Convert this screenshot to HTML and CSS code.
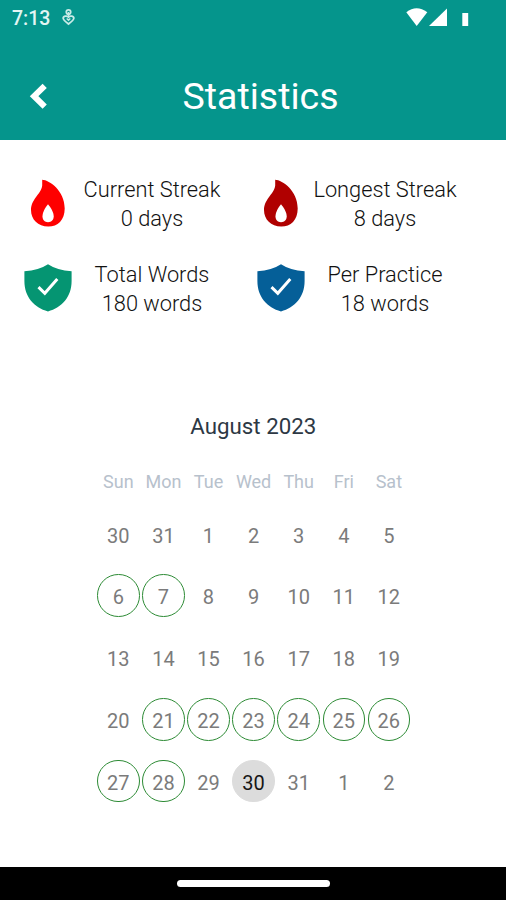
FILE: index.html
```html
<!DOCTYPE html>
<html lang="en">
<head>
<meta charset="utf-8">
<title>Statistics</title>
<link rel="stylesheet" href="styles.css">
</head>
<body>
<div class="screen">
  <header class="header">
    <div class="status">
      <span class="time">7:13</span>
      <svg class="notice" width="13" height="18" viewBox="0 0 13 18" fill="none" stroke="currentColor" stroke-width="1.8"><circle cx="6.5" cy="4" r="2.2"/><path d="M6.5 9.2C4.7 7.3 1 8.1 1.2 10.5C1.4 12.2 4 14.1 6.5 16C9 14.1 11.6 12.2 11.8 10.5C12 8.1 8.3 7.3 6.5 9.2Z"/><path d="M6.5 4v4M4.7 10.5l1.8 1.8 1.8-1.8" stroke-width="1.4"/></svg>
      <svg class="signals" width="66" height="20" viewBox="0 0 66 20" fill="currentColor"><path d="M0.3 4.3Q10.5-4 21.3 4.3L10.7 18Z"/><path d="M41 0.5V18H23Z"/><path d="M56.3 5h5.9v13h-5.9z"/></svg>
    </div>
    <div class="titlebar">
      <svg class="back" width="20" height="28" viewBox="0 0 20 28"><path d="M15.7 3.8 5.1 14.2 15.7 24.6" fill="none" stroke="currentColor" stroke-width="6"/></svg>
      <h1 class="title">Statistics</h1>
    </div>
  </header>
  <main class="content">
    <section class="stats">
      <div class="stat">
        <svg class="icon red" viewBox="0 0 48 48"><path d="M18.2.7C25.5 1.1 40.7 11.6 40.7 29.4C40.7 41 33.8 47.5 24.3 47.5C14 47.5 7 40.5 7 31C7 19.5 18.8 14 18.2 5Z" fill="currentColor"/><path d="M24 25.3C21.5 28.5 18.5 33 18.5 37.3C18.5 41 20.5 43.2 24 43.2C27.5 43.2 29.7 41 29.7 37.3C29.7 33 26.5 28.5 24 25.3Z" fill="#fff"/></svg>
        <p class="label">Current Streak<br>0 days</p>
      </div>
      <div class="stat">
        <svg class="icon dark-red" viewBox="0 0 48 48"><path d="M18.2.7C25.5 1.1 40.7 11.6 40.7 29.4C40.7 41 33.8 47.5 24.3 47.5C14 47.5 7 40.5 7 31C7 19.5 18.8 14 18.2 5Z" fill="currentColor"/><path d="M24 25.3C21.5 28.5 18.5 33 18.5 37.3C18.5 41 20.5 43.2 24 43.2C27.5 43.2 29.7 41 29.7 37.3C29.7 33 26.5 28.5 24 25.3Z" fill="#fff"/></svg>
        <p class="label">Longest Streak<br>8 days</p>
      </div>
      <div class="stat">
        <svg class="icon green" viewBox="0 0 48 48"><path d="M24 .3Q33 6.3 47.6 7.3V17C47.6 33 38 43.5 24 47.4C10 43.5.4 33 .4 17V7.3Q15 6.3 24 .3Z" fill="currentColor"/><path d="M14.5 23.2 20.8 29.3 33.3 15" fill="none" stroke="#fff" stroke-width="3"/></svg>
        <p class="label">Total Words<br>180 words</p>
      </div>
      <div class="stat">
        <svg class="icon blue" viewBox="0 0 48 48"><path d="M24 .3Q33 6.3 47.6 7.3V17C47.6 33 38 43.5 24 47.4C10 43.5.4 33 .4 17V7.3Q15 6.3 24 .3Z" fill="currentColor"/><path d="M14.5 23.2 20.8 29.3 33.3 15" fill="none" stroke="#fff" stroke-width="3"/></svg>
        <p class="label">Per Practice<br>18 words</p>
      </div>
    </section>
    <section class="calendar">
      <h2 class="month">August 2023</h2>
      <div class="weekdays"><span>Sun</span><span>Mon</span><span>Tue</span><span>Wed</span><span>Thu</span><span>Fri</span><span>Sat</span></div>
      <div class="days">
        <span class="day">30</span><span class="day">31</span><span class="day">1</span><span class="day">2</span><span class="day">3</span><span class="day">4</span><span class="day">5</span>
        <span class="day done">6</span><span class="day done">7</span><span class="day">8</span><span class="day">9</span><span class="day">10</span><span class="day">11</span><span class="day">12</span>
        <span class="day">13</span><span class="day">14</span><span class="day">15</span><span class="day">16</span><span class="day">17</span><span class="day">18</span><span class="day">19</span>
        <span class="day">20</span><span class="day done">21</span><span class="day done">22</span><span class="day done">23</span><span class="day done">24</span><span class="day done">25</span><span class="day done">26</span>
        <span class="day done">27</span><span class="day done">28</span><span class="day">29</span><span class="day today">30</span><span class="day">31</span><span class="day">1</span><span class="day">2</span>
      </div>
    </section>
  </main>
  <footer class="navbar"><div class="handle"></div></footer>
</div>
</body>
</html>
```

FILE: styles.css
```css
* { box-sizing: border-box; }

body {
  margin: 0;
  background: #fff;
  font-family: Roboto, "Liberation Sans", sans-serif;
}

.screen {
  display: flex;
  flex-direction: column;
  height: 900px;
}

.header {
  height: 140px;
  background: #05958c;
  color: #fff;
}

.status {
  display: flex;
  align-items: flex-start;
  height: 52px;
  padding: 8px 34px 0 12px;
}

.time {
  width: 50px;
  font-size: 19.5px;
  font-weight: 500;
  line-height: 22px;
  color: #e3f5f3;
}

.notice { color: #c8ebe7; }

.signals { margin-left: auto; }

.titlebar {
  display: grid;
  grid-template-columns: 80px 1fr 65px;
  align-items: center;
  height: 88px;
}

.back { margin-left: 28.5px; }

.title {
  margin: 0;
  text-align: center;
  font-size: 37.5px;
  font-weight: 400;
  line-height: 46px;
}

.content { flex: 1; }

.stats {
  display: grid;
  grid-template-columns: 233px 233px;
  row-gap: 27px;
  padding: 33px 0 0 23.5px;
}

.stat {
  display: grid;
  grid-template-columns: 48px 161px;
  align-items: center;
  height: 58px;
}

.icon { width: 48px; height: 48px; }
.red { color: #fe0000; }
.dark-red { color: #b00000; }
.green { color: #059572; }
.blue { color: #055f98; }

.label {
  margin: 0;
  padding-top: 2px;
  text-align: center;
  font-size: 21.8px;
  font-weight: 300;
  line-height: 29px;
  color: #111;
}

.calendar {
  width: 315.7px;
  margin: 95px auto 0;
  padding-left: .6px;
}

.month {
  margin: 0;
  text-align: center;
  font-size: 22.3px;
  font-weight: 400;
  line-height: 30px;
  color: #2d3844;
}

.weekdays, .days {
  display: grid;
  grid-template-columns: repeat(7, 45.1px);
  justify-items: center;
}

.weekdays {
  margin-top: 30px;
  font-size: 18px;
  line-height: 22px;
  color: #b7c1cc;
}

.days {
  grid-auto-rows: 61.8px;
  align-items: center;
  margin-top: 10px;
}

.day {
  width: 42.5px;
  height: 42.5px;
  padding-top: 2px;
  border: 1.4px solid transparent;
  border-radius: 50%;
  text-align: center;
  font-size: 20px;
  line-height: 40px;
  color: #7b7b7b;
}

.done { border-color: #2d8b35; }

.today {
  border-color: #dcdcdc;
  background: #dcdcdc;
  color: #161616;
}

.navbar {
  display: flex;
  justify-content: center;
  height: 33px;
  padding: 13px 0 0 1px;
  background: #000;
}

.handle {
  width: 153px;
  height: 7px;
  border-radius: 4px;
  background: #fff;
}
```
